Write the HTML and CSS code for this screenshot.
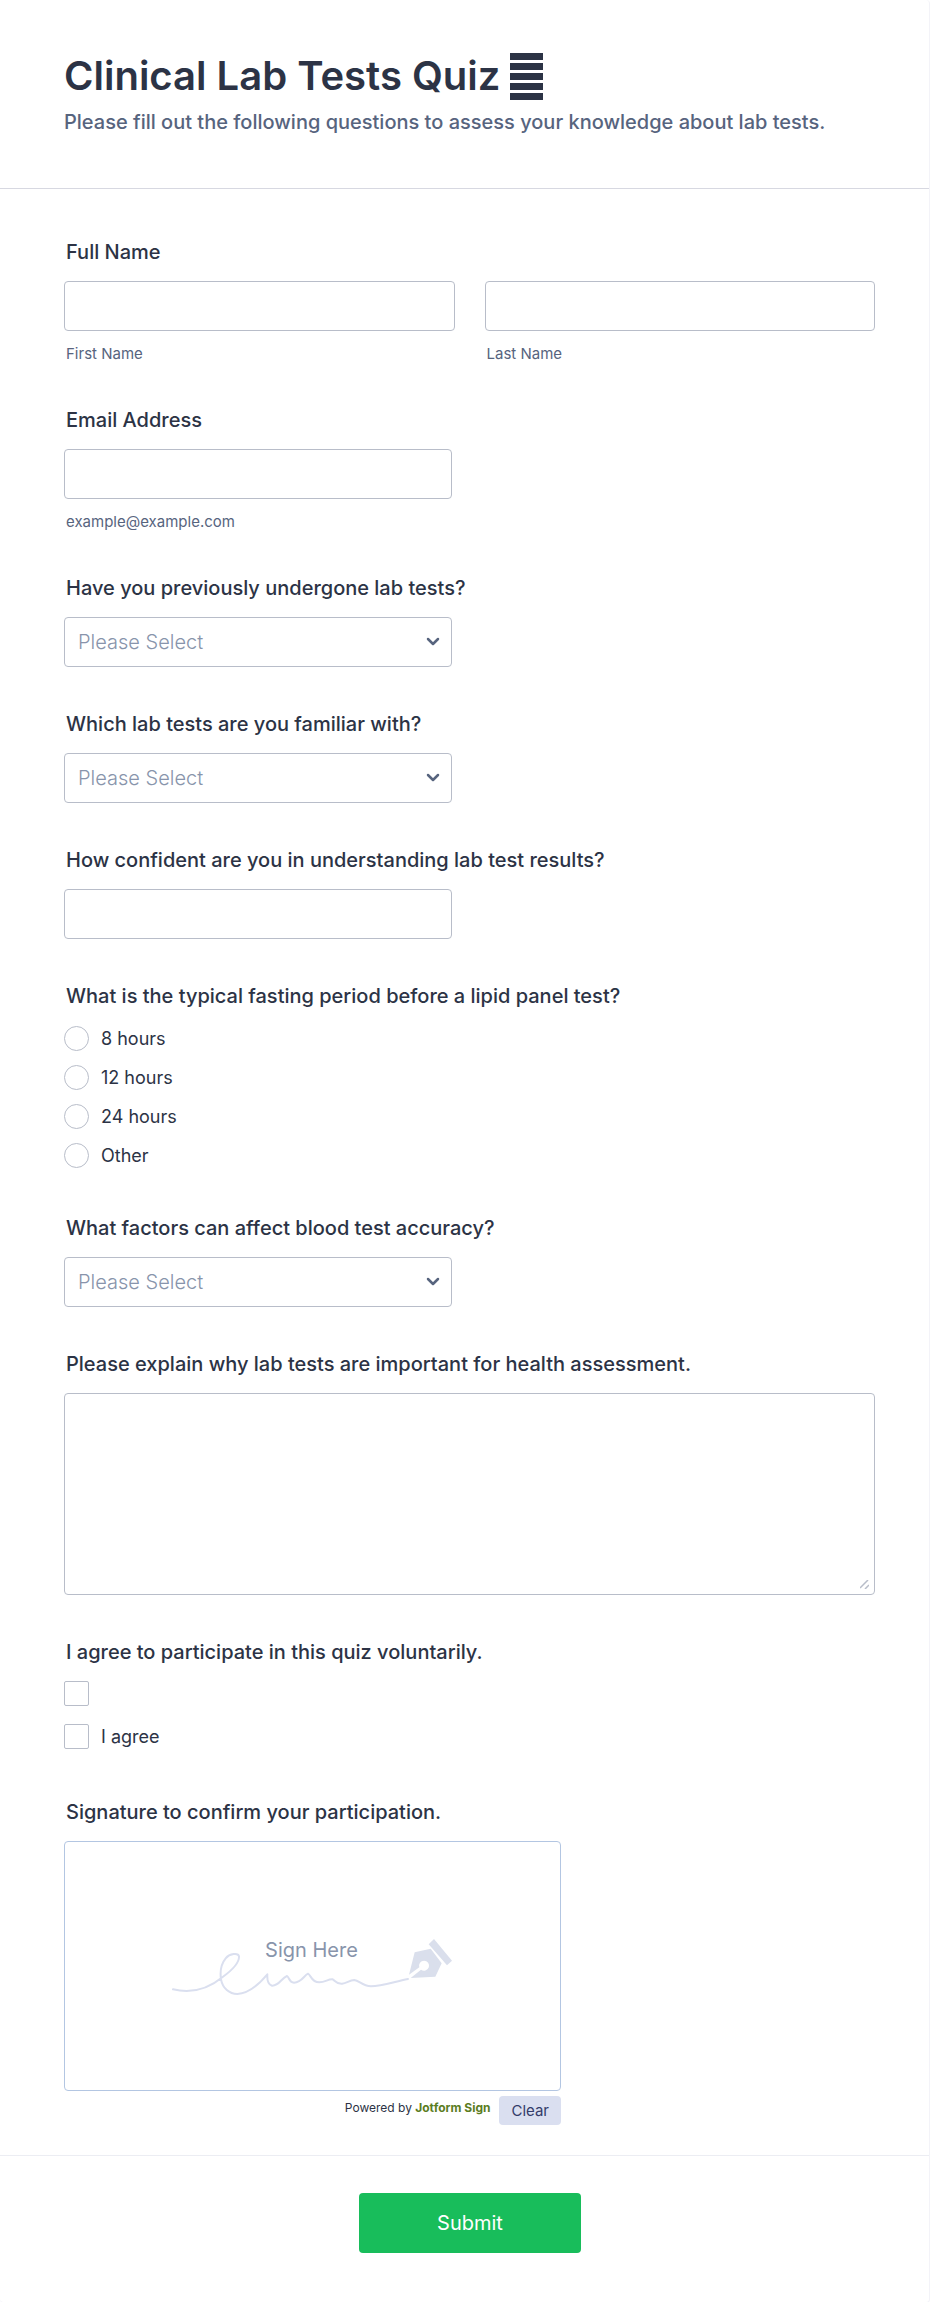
FILE: index.html
```html
<!DOCTYPE html>
<html lang="en">
	<head>
		<meta charset="UTF-8">
		<meta name="viewport" content="width=device-width, initial-scale=1">
		<title>Clinical Lab Tests Quiz</title>
		<link rel="stylesheet" href="styles.css">
	</head>
	<body>
		<form id="quiz" class="quiz" action="" method="post">
			<header class="header">
				<h1>
					Clinical Lab Tests Quiz
					<svg class="bars" viewBox="0 0 33 47" aria-hidden="true">
						<path d="M0 0h33v7H0zM0 10h33v7H0zM0 20h33v7H0zM0 30h33v7H0zM0 40h33v7H0z"/>
					</svg>
				</h1>
				<p>Please fill out the following questions to assess your knowledge about lab tests.</p>
			</header>
			<div class="questions">
				<fieldset class="formitem">
					<legend class="title">Full Name</legend>
					<div class="names">
						<div>
							<input class="box" type="text" id="first" name="first">
							<label class="hint" for="first">First Name</label>
						</div>
						<div>
							<input class="box" type="text" id="last" name="last">
							<label class="hint" for="last">Last Name</label>
						</div>
					</div>
				</fieldset>
				<div class="formitem">
					<label class="title" for="email">Email Address</label>
					<input class="box short" type="email" id="email" name="email" aria-describedby="emailHint">
					<span id="emailHint" class="hint">example@example.com</span>
				</div>
				<div class="formitem">
					<label class="title" for="undergone">Have you previously undergone lab tests?</label>
					<div class="dropdown short">
						<select class="box" id="undergone" name="undergone">
							<option value="">Please Select</option>
						</select>
						<svg class="arrow" viewBox="0 0 14 10" aria-hidden="true"><path d="M2 2l5 5 5-5"/></svg>
					</div>
				</div>
				<div class="formitem">
					<label class="title" for="familiar">Which lab tests are you familiar with?</label>
					<div class="dropdown short">
						<select class="box" id="familiar" name="familiar">
							<option value="">Please Select</option>
						</select>
						<svg class="arrow" viewBox="0 0 14 10" aria-hidden="true"><path d="M2 2l5 5 5-5"/></svg>
					</div>
				</div>
				<div class="formitem">
					<label class="title" for="confident">How confident are you in understanding lab test results?</label>
					<input class="box short" type="text" id="confident" name="confident">
				</div>
				<fieldset class="formitem">
					<legend class="title">What is the typical fasting period before a lipid panel test?</legend>
					<div class="options">
						<label><input type="radio" name="fasting" value="8">8 hours</label>
						<label><input type="radio" name="fasting" value="12">12 hours</label>
						<label><input type="radio" name="fasting" value="24">24 hours</label>
						<label><input type="radio" name="fasting" value="other">Other</label>
					</div>
				</fieldset>
				<div class="formitem">
					<label class="title" for="factors">What factors can affect blood test accuracy?</label>
					<div class="dropdown short">
						<select class="box" id="factors" name="factors">
							<option value="">Please Select</option>
						</select>
						<svg class="arrow" viewBox="0 0 14 10" aria-hidden="true"><path d="M2 2l5 5 5-5"/></svg>
					</div>
				</div>
				<div class="formitem">
					<label class="title" for="explain">Please explain why lab tests are important for health assessment.</label>
					<div class="longtext">
						<textarea class="box" id="explain" name="explain"></textarea>
						<svg class="grip" viewBox="0 0 9 9" aria-hidden="true"><path d="M0 8l8-8M5 9l4-4"/></svg>
					</div>
				</div>
				<fieldset class="formitem">
					<legend class="title">I agree to participate in this quiz voluntarily.</legend>
					<div class="options checks">
						<label><input type="checkbox" name="agree" value="" aria-label="Agreement"></label>
						<label><input type="checkbox" name="agree" value="yes">I agree</label>
					</div>
				</fieldset>
				<div class="formitem signature">
					<div class="title">Signature to confirm your participation.</div>
					<div class="pad">
						<svg class="scribble" viewBox="30 54 840 180" aria-hidden="true">
							<path class="line" d="M33 208C92 222 140 206 182 171C215 147 232 124 231 109C229 98 203 100 191 115C177 132 174 157 177 178C182 205 202 222 226 222C258 220 291 193 316 163C315 180 319 194 330 197C352 198 358 174 375 168C383 173 380 187 396 188C420 187 426 166 438 161C447 165 448 187 472 187C491 186 498 177 512 178C519 182 522 192 540 191C555 189 562 181 577 180C591 181 601 198 627 199C660 198 697 185 738 177"/>
							<path class="nib" d="M741 164L758 97L806 86L839 130L820 170L746 174L777 149A15 15 0 1 0 772 142Z"/>
							<path class="nib" d="M800 73L816 57L870 122L855 136Z"/>
						</svg>
						<span>Sign Here</span>
					</div>
					<div class="tools">
						<p>Powered by <b>Jotform Sign</b></p>
						<button type="button">Clear</button>
					</div>
				</div>
			</div>
			<footer class="footer">
				<button type="submit">Submit</button>
			</footer>
		</form>
	</body>
</html>
```

FILE: styles.css
```css
* {
	margin: 0;
	padding: 0;
	box-sizing: border-box;
}
body {
	background-color: #fff;
	color: #2c3345;
	font-family: Inter, "Liberation Sans", sans-serif;
	font-size: 20px;
	line-height: 24px;
}
input, select, textarea, button {
	font: inherit;
	color: inherit;
}
.quiz {
	border-right: 1px solid #f3f3f8;
	border-bottom: 1px solid #f3f3f8;
	border-radius: 4px;
}
.header {
	padding: 52px 54px 54px 64px;
	border-bottom: 1px solid #d7d8e1;
}
.header h1 {
	display: flex;
	flex-wrap: wrap;
	align-items: center;
	gap: 10px;
	font-size: 40px;
	font-weight: 600;
	line-height: 48px;
}
.header p {
	margin-top: 10px;
	color: #57647e;
	font-weight: 500;
}
.bars {
	width: 33px;
	height: 47px;
	fill: #2c3345;
}
.questions {
	padding: 51px 54px 30px 64px;
}
.formitem {
	margin-bottom: 45px;
	border: none;
}
.title {
	display: block;
	margin-bottom: 17px;
	padding-left: 2px;
	font-weight: 500;
}
.box {
	display: block;
	width: 100%;
	height: 50px;
	padding: 0 13px;
	border: 1px solid #b8bdc9;
	border-radius: 4px;
	background-color: #fff;
}
.short {
	width: 100%;
	max-width: 388px;
}
.names {
	display: grid;
	grid-template-columns: 1fr 1fr;
	gap: 30px;
}
.hint {
	display: block;
	margin-top: 14px;
	padding-left: 2px;
	color: #57647e;
	font-size: 15px;
	line-height: 18px;
}
.dropdown {
	display: grid;
	align-items: center;
}
.dropdown .box {
	grid-area: 1 / 1;
	appearance: none;
	color: #8894ab;
	font-weight: 300;
}
.arrow {
	grid-area: 1 / 1;
	justify-self: end;
	width: 14px;
	height: 10px;
	margin-right: 12px;
	fill: none;
	stroke: #57647e;
	stroke-width: 2.5;
	stroke-linecap: round;
	stroke-linejoin: round;
	pointer-events: none;
}
.longtext {
	display: grid;
	align-items: end;
}
.longtext .box {
	grid-area: 1 / 1;
	height: 202px;
	padding: 12px 13px;
	resize: none;
}
.grip {
	grid-area: 1 / 1;
	justify-self: end;
	width: 9px;
	height: 9px;
	margin: 6px;
	fill: none;
	stroke: #b8bdc9;
	stroke-width: 1.5;
	pointer-events: none;
}
.options {
	display: flex;
	flex-direction: column;
	align-items: flex-start;
	gap: 14px;
	padding: 1px 0 3px;
	font-size: 18px;
}
.checks {
	gap: 18px;
	padding: 0 0 6px;
}
.options label {
	display: flex;
	align-items: center;
	gap: 12px;
}
.options input {
	appearance: none;
	width: 25px;
	height: 25px;
	border: 1px solid #b8bdc9;
	border-radius: 50%;
	background-color: #fff;
}
.options input[type="checkbox"] {
	border-radius: 2px;
}
.options input:checked {
	background-color: #57647e;
}
.signature {
	max-width: 497px;
	margin-bottom: 0;
}
.pad {
	display: grid;
	place-content: center;
	justify-items: center;
	height: 250px;
	padding: 4px 2px 0 0;
	border: 1px solid #b3c6e2;
	border-radius: 4px;
}
.pad span {
	grid-area: 1 / 1;
	color: #8894ab;
}
.scribble {
	grid-area: 1 / 1;
	width: 280px;
	height: 60px;
}
.scribble .line {
	fill: none;
	stroke: #dadfef;
	stroke-width: 6;
	stroke-linecap: round;
	stroke-linejoin: round;
}
.scribble .nib {
	fill: #dadfec;
}
.tools {
	display: flex;
	justify-content: flex-end;
	gap: 9px;
	margin-top: 5px;
	font-size: 12px;
}
.tools b {
	color: #5b7d1f;
}
.tools button {
	height: 29px;
	padding: 0 12px;
	border: none;
	border-radius: 4px;
	background-color: #dadff0;
	color: #343c6a;
	font-size: 15px;
	cursor: pointer;
}
.footer {
	display: flex;
	justify-content: center;
	padding: 37px 53px 49px 64px;
	border-top: 1px solid #ecedf3;
}
.footer button {
	width: 222px;
	height: 60px;
	border: none;
	border-radius: 4px;
	background-color: #18bd5b;
	color: #fff;
	cursor: pointer;
}
```
